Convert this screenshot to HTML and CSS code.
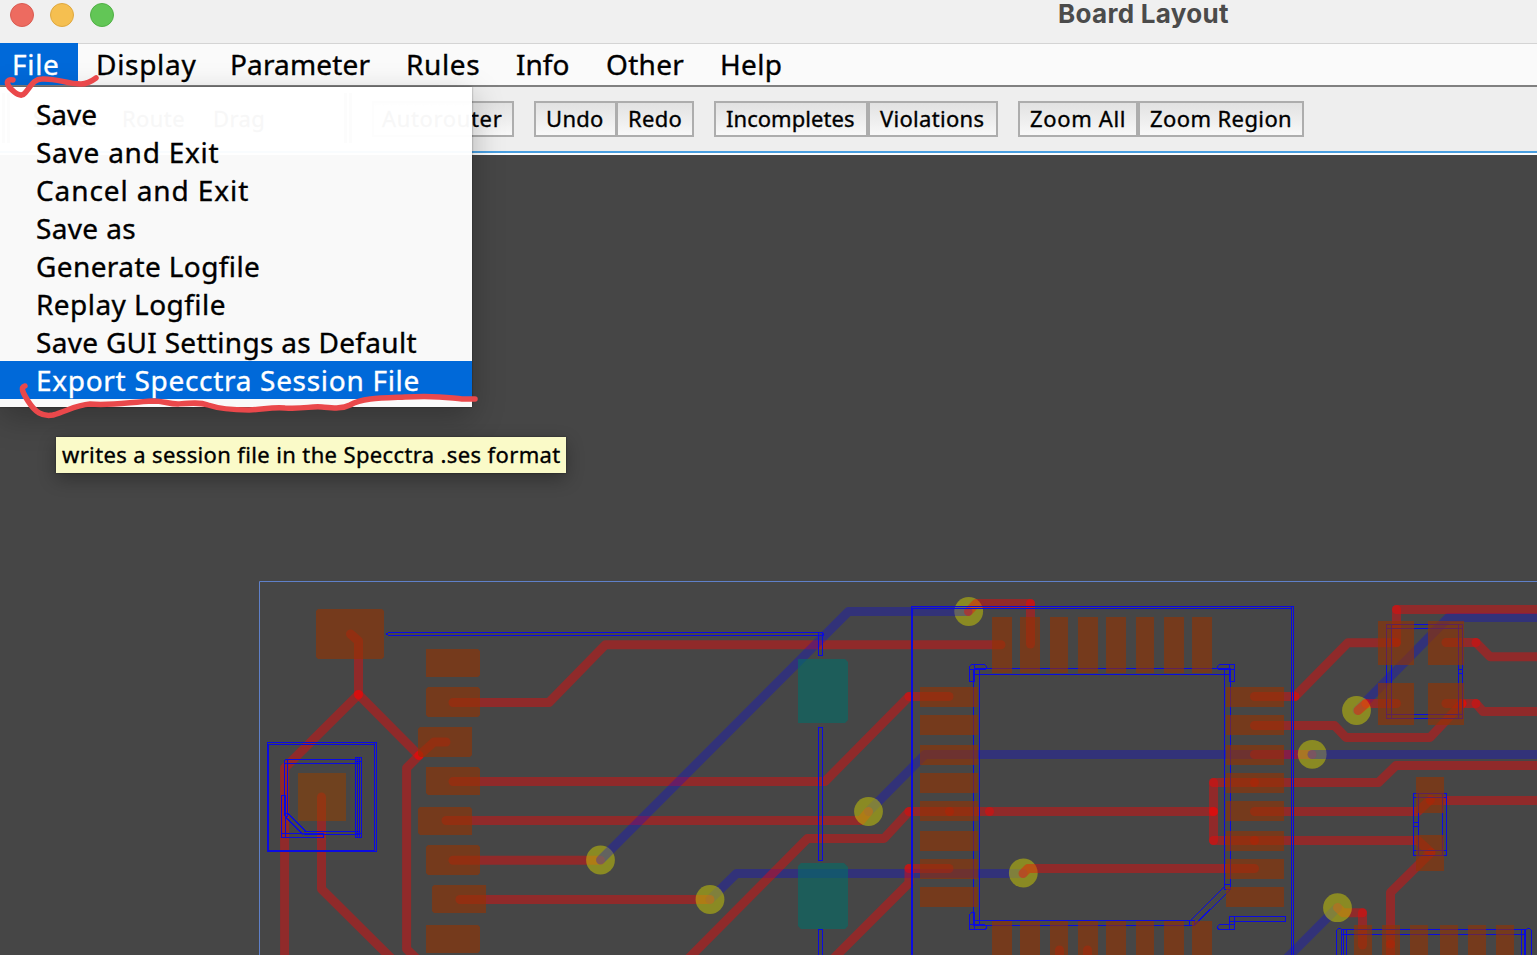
FILE: index.html
```html
<!DOCTYPE html>
<html lang="en">
<head>
<meta charset="utf-8">
<title>Board Layout</title>
<link rel="stylesheet" href="styles.css">
</head>
<body>
<div class="window">
  <header class="titlebar">
    <div class="lights"><span class="light close"></span><span class="light minimize"></span><span class="light maximize"></span></div>
    <h1 class="title">Board Layout</h1>
  </header>
  <nav class="menubar">
    <span class="menu menu-file active">File</span>
    <span class="menu menu-display">Display</span>
    <span class="menu menu-parameter">Parameter</span>
    <span class="menu menu-rules">Rules</span>
    <span class="menu menu-info">Info</span>
    <span class="menu menu-other">Other</span>
    <span class="menu menu-help">Help</span>
  </nav>
  <div class="toolbar">
    <div class="modes"><span class="mode select">Select</span><span class="mode route">Route</span><span class="mode">Drag</span></div>
    <div class="group"><button class="btn autorouter">Autorouter</button></div>
    <div class="group"><button class="btn undo">Undo</button><button class="btn redo">Redo</button></div>
    <div class="group"><button class="btn incompletes">Incompletes</button><button class="btn violations">Violations</button></div>
    <div class="group"><button class="btn zoom-all">Zoom All</button><button class="btn zoom-region">Zoom Region</button></div>
  </div>
  <main class="board">
    <svg class="board-canvas" viewBox="0 155 1537 800" width="1537" height="800">
      <path class="edge" d="M1540 581.5H259.5V960"/>
      <g class="trace back">
        <path d="M868.5 811.5L925 754.5H1312"/>
        <path d="M710 899.5L736.5 873.5H1023"/>
        <path d="M1357 710.5L1448.5 617.5H1545"/>
        <path d="M1337.5 907.5L1283 962"/>
      </g>
      <g class="trace front">
        <path d="M350.500 634L358.500 641V694.500"/>
        <path d="M358.500 694.500L284.600 768V962"/>
        <path d="M358.500 694.500L419 755.500"/>
        <path d="M446 742H434L419 755.500"/>
        <path d="M419 755.500L406.600 768V949L420 962"/>
        <path d="M321.500 797V889L395 962"/>
        <path d="M453 702.500H549L605.500 644.700H1001"/>
        <path d="M453 781.500H825L909 696.500"/>
        <path d="M909 696.500H949"/>
        <path d="M446 820.500H861L868.500 811.500"/>
        <path d="M453 860.300H600.500"/>
        <path d="M460 899.500H710"/>
        <path d="M685 962L807.500 838.500H884L909 811.500"/>
        <path d="M909 811.500H949.500"/>
        <path d="M949.500 811.500H989.500"/>
        <path d="M989.500 811.500H1213.500"/>
        <path d="M830 962L909 883V868.500"/>
        <path d="M909 868.500H949"/>
        <path d="M1030.500 603.500V644"/>
        <path d="M1254.500 696.500H1295"/>
        <path d="M1295 696.500L1348 642.700H1396.500"/>
        <path d="M1254.500 725.500H1334.500L1346 737.500H1430L1462 703.500"/>
        <path d="M1254.500 754.500H1312"/>
        <path d="M1213.500 782.500H1254.500"/>
        <path d="M1254.500 782.500H1378.500L1396 765.500H1545"/>
        <path d="M1213.500 782.500V811.500"/>
        <path d="M1213.500 811.500V840.500"/>
        <path d="M1254.500 811.500H1418L1430.500 799.500"/>
        <path d="M1213.500 840.500H1254.500"/>
        <path d="M1254.500 840.500H1418L1431 852.500"/>
        <path d="M1431 852.500L1390.500 892.500V944"/>
        <path d="M1390.500 944V962"/>
        <path d="M1430.500 800.500H1545"/>
        <path d="M1396.500 642.500V609.500"/>
        <path d="M1396.500 609.500H1545"/>
        <path d="M1446 642.500H1476"/>
        <path d="M1476 642.500L1490 656.700H1545"/>
        <path d="M1396.500 703.500H1366"/>
        <path d="M1446 703.500H1462"/>
        <path d="M1462 703.500H1476"/>
        <path d="M1476 703.500L1483 711.500H1545"/>
        <path d="M1337.500 907.500L1343 912.700H1362.500"/>
        <path d="M1362.500 912.700V945"/>
        <path d="M1059.500 950V962"/>
        <path d="M1087.500 950V962"/>
      </g>
      <g class="via">
        <circle cx="968.700" cy="611.500" r="14.400"/><circle cx="600.500" cy="860" r="14.400"/><circle cx="710" cy="899.500" r="14.400"/><circle cx="868.500" cy="811.500" r="14.400"/>
        <circle cx="1023.300" cy="873" r="14.400"/><circle cx="1312.200" cy="754.300" r="14.400"/><circle cx="1356.500" cy="710.500" r="14.400"/><circle cx="1337.500" cy="907.700" r="14.400"/>
      </g>
      <g class="trace back">
        <path d="M600.5 860L848.5 611.5H968"/>
        <path d="M1312 754.5H1545"/>
      </g>
      <g class="trace front">
        <path d="M968.500 611.500L976 603.500H1030.500"/>
        <path d="M1023 873.500L1028 868.500H1254.500"/>
        <path d="M1366 703.500L1358 710.500"/>
      </g>
      <g class="outline">
        <path d="M823 632.500H388.500L386.500 634L388.500 635.500H823V632.500M818.500 632.500H822.500V655.500H818.500ZM818.500 727.500H822.500V860.500H818.500ZM818.500 929.500H822.500V962H818.500Z"/>
        <path d="M911.500 962V606.500H1293.500V962M912.500 962V608.500H1291.500V962M1291.500 606.500V608.500"/>
        <path d="M973.500 668.500H1230.500M973.500 674.500H1230.500M973.500 668.500V925.500M979.500 668.500V925.500M1224.500 668.500V888M1230.500 668.500V888M973.500 920.500H1190M973.500 925.500H1192"/>
        <path d="M1224.500 884.500H1230.500V889.500L1194 925.500H1189.500V921.500L1224.500 886.500ZM1189.500 920.500H1194.500V925.500M1224.500 884.500V889.500H1230.500"/>
        <path d="M971.500 664.500H984.500L986.500 666.500V668.500L984.500 669.500H969.500V666.500ZM969.500 666.500V681.500H974.500V664.500"/>
        <path d="M1219.500 664.500H1234.500V681.500H1229.500V664.500M1219.500 664.500L1217.500 666.500V668.500L1219.500 669.500H1234.500"/>
        <path d="M971.500 912.500H974.500V929.500H969.500V914.500ZM969.500 924.500H984.500L986.500 926.500V928.500L984.500 929.500H969.500"/>
        <path d="M1229.500 916.500H1285.500V921.500H1229.500ZM1229.500 916.500V929.500H1234.500V916.500M1234.500 924.500H1219.500L1217.500 926.500V928.500L1219.500 929.500H1234.500"/>
        <path d="M267.500 742.500H376.500V851.500H267.500ZM268.500 744.500H374.500V850.500H268.500ZM374.500 742.500V851.500"/>
        <path d="M284.500 759.500H359.500M284.500 763.500H359.500M284.500 759.500V816M287.500 759.500V816M355.500 757.500H361.500V837.500H355.500ZM357.500 757.500V837.500M359.500 757.500V837.500M355.500 761.500H361.500M355.500 833.500H361.500M303.500 831.500H359.500M303.500 834.500H359.500M281.500 795.500H285.500V837.500H281.500ZM281.500 833.500H323.500V837.500H281.500ZM285 816.500L303 834.500M288 813.500L306 831.500M284.500 813.500H287.500V816.500H284.500"/>
        <path d="M1386.500 624.500H1462.500V718.500H1386.500ZM1391.500 624.500V718.500M1458.500 624.500V718.500M1386.500 628.500H1462.500M1386.500 714.500H1462.500M1458.500 669.500H1462.500V673.500H1458.500Z"/>
        <path d="M1413.500 793.500H1446.500V855.500H1413.500ZM1418.500 793.500V855.500M1442.500 793.500V855.500M1413.500 797.500H1446.500M1413.500 850.500H1446.500M1413.500 822.500H1418.500V826.500H1413.500Z"/>
        <path d="M1336.500 962V930.500L1338.500 928.500H1340.500L1342.500 930.500M1341.500 929.500V962M1343.500 929.500V962M1346.500 929.500V962M1341.500 929.500H1525.500M1341.500 934.500H1525.500M1521.500 929.500V962M1524.500 929.500V962M1525.500 929.500V962M1525.500 930.500L1527.500 928.500H1529.500L1531.500 930.500V962"/>
      </g>
      <g class="pad">
        <path d="M318 609H382L384 611V657L382 659H318L316 657V611Z"/>
        <path d="M426 649H478L480 651V675L478 677H426ZM428 687H478L480 689V715L478 717H428L426 715V689ZM420 727H472V755L470 757H420L418 755V729ZM426 767H478L480 769V795H428L426 793ZM420 807H470L472 809V835H420L418 833V809ZM428 845H478L480 847V873L478 875H428L426 873V847ZM434 885H486V913H434L432 911V887ZM426 925H478L480 927V951L478 953H426Z"/>
        <path d="M920 687h58v20h-58zM920 715h58v20h-58zM920 745h58v20h-58zM920 773h58v20h-58zM920 801h58v20h-58zM920 831h58v20h-58zM920 859h58v20h-58zM920 887h58v20h-58z"/>
        <path d="M1226 687h58v20h-58zM1226 715h58v20h-58zM1226 745h58v20h-58zM1226 773h58v20h-58zM1226 801h58v20h-58zM1226 831h58v20h-58zM1226 859h58v20h-58zM1226 887h58v20h-58z"/>
        <path d="M992 617h20v56h-20zM1020 617h20v56h-20zM1050 617h18v56h-18zM1078 617h20v56h-20zM1106 617h20v56h-20zM1136 617h18v56h-18zM1164 617h20v56h-20zM1192 617h20v56h-20z"/>
        <path d="M992 921h20v40h-20zM1020 921h20v40h-20zM1050 921h18v40h-18zM1078 921h20v40h-20zM1106 921h20v40h-20zM1136 921h18v40h-18zM1164 921h20v40h-20zM1192 921h20v40h-20z"/>
        <path d="M1378 621h36v44h-36zM1428 621h36v44h-36zM1378 683h36v42h-36zM1428 683h36v42h-36zM1416 777h28v36h-28zM1416 835h28v36h-28z"/>
        <path d="M1354 925h18v40h-18zM1382 925h18v40h-18zM1410 925h18v40h-18zM1440 925h18v40h-18zM1468 925h18v40h-18zM1496 925h18v40h-18z"/>
      </g>
      <path class="pad-center" d="M298 773h48v48h-48z"/>
      <path class="pad-back" d="M798 659H845L848 662V720L845 723H798ZM801 863H844L848 867V926L845 929H801L798 926V866Z"/>
    </svg>
  </main>
</div>
<div class="dropdown">
  <div class="item s1">Save</div>
  <div class="item s2">Save and Exit</div>
  <div class="item s3">Cancel and Exit</div>
  <div class="item s4">Save as</div>
  <div class="item s5">Generate Logfile</div>
  <div class="item s6">Replay Logfile</div>
  <div class="item s7">Save GUI Settings as Default</div>
  <div class="item s8 selected">Export Specctra Session File</div>
</div>
<div class="tooltip">writes a session file in the Specctra .ses format</div>
<svg class="marks" width="500" height="430" viewBox="0 0 500 430">
  <path d="M13 80C5 79 7 84 10 88C15 93 21 98 25 93C31 86 34 79 42 79C56 78 67 84 81 84C88 84 92 81 96 78"/>
  <path d="M25 386C20 387 23 393 28 401C35 412 42 417 53 415C67 411 76 405 90 404C111 406 130 402 153 401C164 401 168 404 178 404C190 403 200 402 208 405C220 409 231 410 249 410C266 409 272 407 285 408C306 409 310 406 322 407C334 408 342 409 350 405C362 398 382 398 405 397C440 395 449 398 462 399C467 399 471 399 475 399"/>
</svg>
</body>
</html>
```
FILE: styles.css
```css
* { box-sizing: border-box; }

body {
  margin: 0;
  width: 1537px;
  height: 955px;
  overflow: hidden;
  position: relative;
  background: #464646;
  color: #000;
  font-family: "Noto Sans", "Open Sans", sans-serif;
}

.window { display: flex; flex-direction: column; height: 955px; }

.titlebar {
  height: 43px;
  flex: none;
  display: flex;
  align-items: flex-start;
  background: #f0f0f0;
}
.lights { display: flex; gap: 16px; padding: 3px 0 0 10px; width: 1058px; }
.light { width: 24px; height: 24px; border-radius: 50%; border: 1px solid; }
.close { background: #ed6b60; border-color: #d95b51; }
.minimize { background: #f5bf50; border-color: #dfa83f; }
.maximize { background: #62c656; border-color: #50b045; }
.title {
  margin: 0;
  font: 700 26px/28px Inter, sans-serif;
  letter-spacing: 0.3px;
  color: #4b4b4b;
  white-space: nowrap;
}

.menubar {
  height: 44px;
  flex: none;
  display: flex;
  background: #fafafa;
  border-top: 1px solid #d4d4d4;
  border-bottom: 2px solid #808080;
}
.menu, .item, .mode, .btn, .tooltip { -webkit-text-stroke: 0.35px currentColor; }
.menu { font-size: 28px; line-height: 41px; white-space: nowrap; height: 41px; }
.menu-file { width: 78px; height: 42px; margin-top: -1px; padding-left: 12px; line-height: 43px; letter-spacing: 0.7px; }
.menu-display { width: 134px; margin-left: 18px; letter-spacing: 0.7px; }
.menu-parameter { width: 176px; letter-spacing: 0.15px; }
.menu-rules { width: 110px; letter-spacing: 0.6px; }
.menu-info { width: 90px; }
.menu-other { width: 114px; letter-spacing: 0.3px; }
.menu-help { letter-spacing: 0.3px; }
.active { background: #0069d9; color: #fff; }

.toolbar {
  height: 68px;
  flex: none;
  display: flex;
  gap: 20px;
  padding-top: 14px;
  background: #eee;
  border-bottom: 2px solid #fff;
  box-shadow: inset 0 -2px #4a9fe0;
}
.modes {
  width: 350px;
  height: 50px;
  margin: -8px 0 0 2px;
  padding: 7px 0 0 23px;
  display: flex;
  border-left: 8px double #aaa;
  border-right: 8px double #aaa;
}
.mode { font-size: 22px; line-height: 36px; letter-spacing: 0.4px; }
.select { width: 89px; }
.route { width: 91px; }
.group { display: flex; height: 36px; }
.btn {
  height: 36px;
  padding: 0 0 2px 10px;
  border: 2px solid #adadad;
  border-radius: 0;
  background: linear-gradient(#e2e2e2, #f8f8f8);
  font-family: "Noto Sans", sans-serif;
  font-size: 22px;
  line-height: 30px;
  letter-spacing: 0.3px;
  text-align: left;
  white-space: nowrap;
  color: #000;
}
.autorouter { width: 142px; padding-left: 8px; letter-spacing: 0.65px; }
.undo { width: 82px; border-right-width: 1px; }
.redo { width: 78px; }
.incompletes { width: 154px; letter-spacing: 0.05px; }
.violations { width: 130px; }
.zoom-all { width: 120px; letter-spacing: 0.65px; }
.zoom-region { width: 166px; letter-spacing: 0.4px; }

.board { flex: 1; background: #464646; }
.board-canvas { display: block; }
.edge { fill: none; stroke: #5f80c8; stroke-width: 1; }
.trace { fill: none; stroke-width: 9; stroke-linecap: round; stroke-linejoin: round; }
.back { stroke: rgba(0, 0, 255, 0.28); }
.front { stroke: rgba(255, 0, 0, 0.4); }
.outline { fill: none; stroke: #0b0be0; stroke-width: 1; shape-rendering: crispEdges; }
.pad { fill: rgba(147, 50, 2, 0.61); }
.pad-center { fill: rgba(147, 63, 0, 0.55); }
.pad-back { fill: rgba(2, 108, 104, 0.6); }
.via { fill: rgba(206, 206, 0, 0.5); }

.dropdown {
  position: absolute;
  left: 0;
  top: 87px;
  width: 472px;
  height: 320px;
  padding: 8px 0;
  background: rgba(255, 255, 255, 0.97);
  box-shadow: 0 10px 30px rgba(0, 0, 0, 0.26), 0 0 2px rgba(0, 0, 0, 0.4);
}
.item { height: 38px; padding-left: 36px; font-size: 28px; line-height: 38px; white-space: nowrap; }
.s2 { letter-spacing: 0.75px; }
.s3 { letter-spacing: 0.9px; }
.s4 { letter-spacing: 0.35px; }
.s5 { letter-spacing: 0.4px; }
.s6 { letter-spacing: 0.45px; }
.s7 { letter-spacing: 0.3px; }
.s8 { letter-spacing: 0.7px; }
.selected { background: #0069d9; color: #fff; }

.tooltip {
  position: absolute;
  left: 56px;
  top: 437px;
  width: 510px;
  height: 36px;
  padding-left: 6px;
  background: #fafac8;
  font-size: 22px;
  line-height: 34px;
  letter-spacing: 0.37px;
  white-space: nowrap;
  box-shadow: 0 6px 18px rgba(0, 0, 0, 0.3), 0 0 2px rgba(0, 0, 0, 0.4);
}

.marks { position: absolute; left: 0; top: 0; }
.marks path { fill: none; stroke: #ea484b; stroke-width: 5.5; stroke-linecap: round; stroke-linejoin: round; }
```
